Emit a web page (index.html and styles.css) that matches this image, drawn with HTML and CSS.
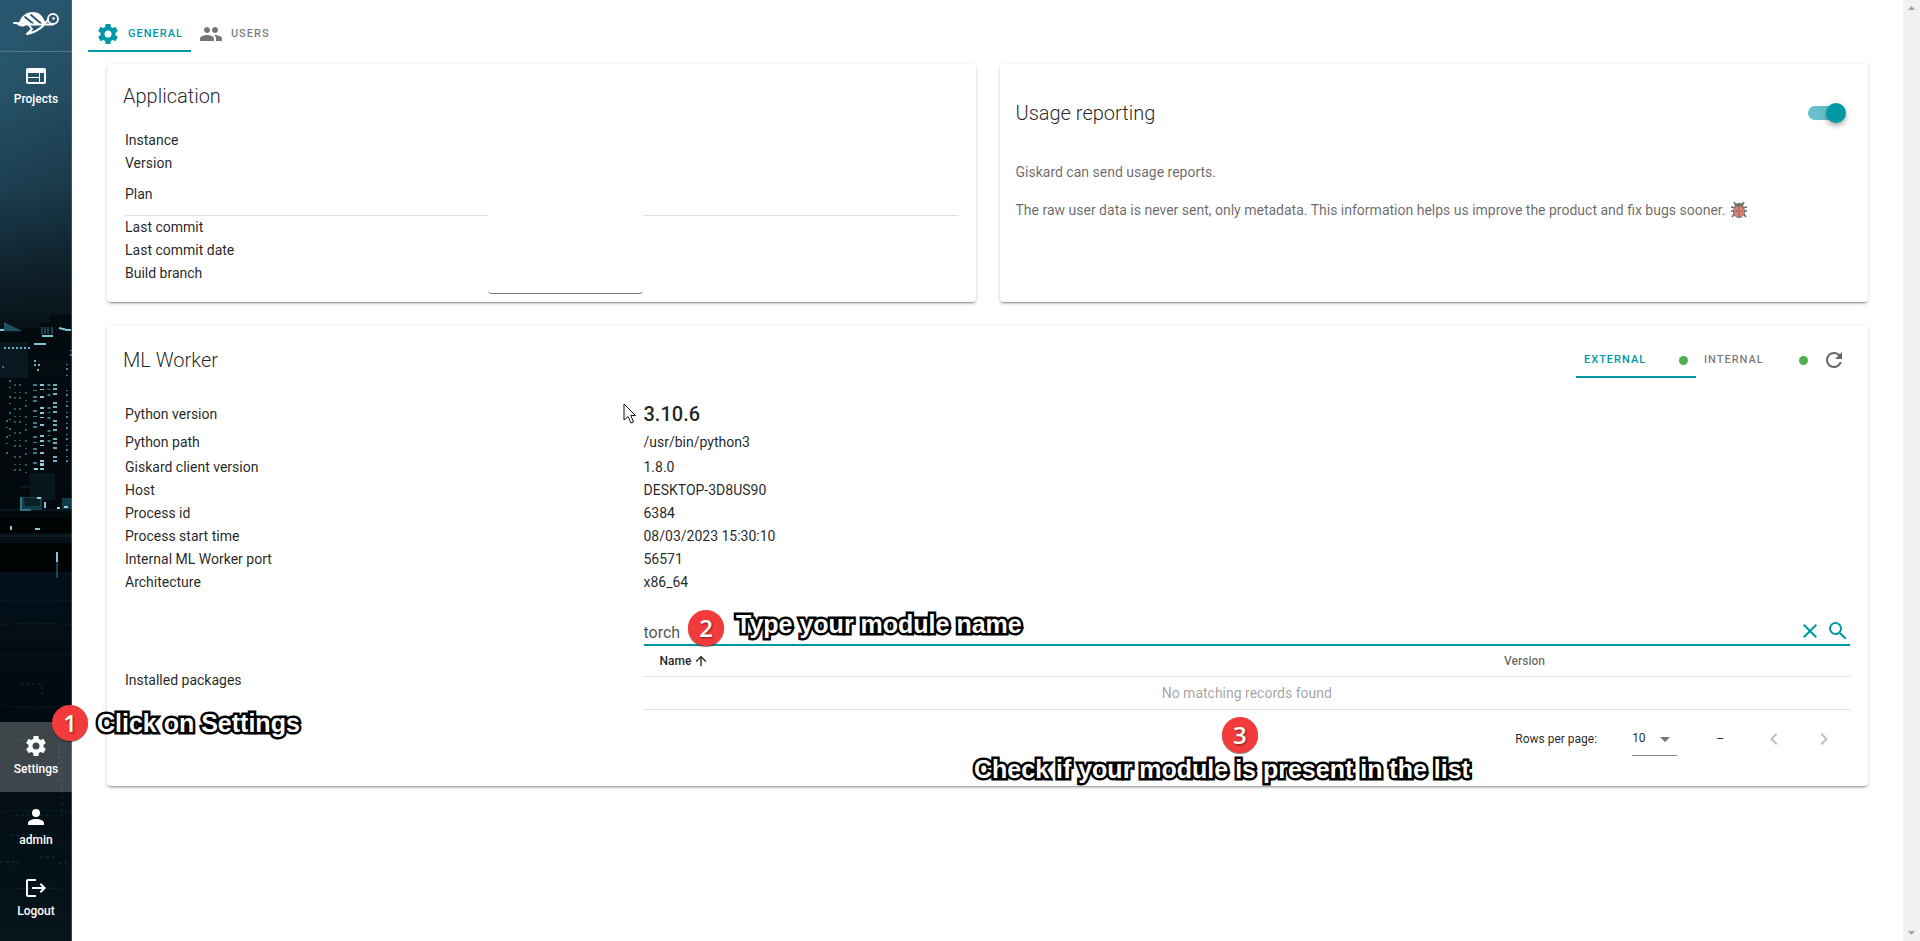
FILE: index.html
```html
<!DOCTYPE html>
<html lang="en">
<head>
<meta charset="utf-8">
<title>Giskard settings</title>
<link rel="stylesheet" href="styles.css">
</head>
<body>
<div class="app">
  <nav class="sidebar">
    <svg class="skyline" viewBox="0 0 72 941" preserveAspectRatio="xMidYMid slice" aria-hidden="true">
      <defs>
        <linearGradient id="sky" x1="0" y1="0" x2="0" y2="1">
          <stop offset="0" stop-color="#28566e"/><stop offset=".1" stop-color="#28566d"/><stop offset=".2" stop-color="#214a5f"/>
          <stop offset=".28" stop-color="#15303f"/><stop offset=".35" stop-color="#0a1921"/><stop offset=".45" stop-color="#050d12"/>
          <stop offset=".6" stop-color="#020608"/><stop offset=".612" stop-color="#03101a"/><stop offset=".75" stop-color="#020a10"/><stop offset="1" stop-color="#06141c"/>
        </linearGradient>
        <linearGradient id="shade" gradientUnits="userSpaceOnUse" x1="0" y1="60" x2="130" y2="190"><stop offset="0" stop-color="#000" stop-opacity="0"/><stop offset="1" stop-color="#000" stop-opacity=".3"/></linearGradient>
        <filter id="soft"><feGaussianBlur stdDeviation=".6"/></filter>
      </defs>
      <rect width="72" height="941" fill="url(#sky)"/>
      <rect width="72" height="360" fill="url(#shade)"/>
      <path d="M0 333H20V328H40V322H50V315H72V573H0Z" fill="#03090d" opacity=".75"/>
      <path d="M0 342H28V378H0Z" fill="#0d222c" opacity=".6"/>
      <path d="M30 473H55V500H30Z" fill="#0b1c25" opacity=".7"/>
      <path d="M0 518H72V574H0Z" fill="#000" opacity=".6"/>
      <path d="M0 533H72V543H0Z" fill="#0a171e" opacity=".7"/>
      <path d="M20 487H30M0 510H72M0 536H72M0 573H72" stroke="#17313e" stroke-width="1" opacity=".7"/>
      <g filter="url(#soft)" opacity=".85">
        <path d="M4 322L22 331H4Z" fill="#235b73"/>
        <path d="M20 497H42V510H20ZM62 498H72V509H62Z" fill="#174456"/><path d="M24 498H40V506H25Z" fill="#08202a"/>
        <path d="M21 497V510H31" stroke="#4c9dbc" stroke-width="1.5" fill="none"/>
        <path d="M0 330H4M42 336H53M59 328L67 330H71M34 344H46M45 502V508M35 529H40M11 526V530M57 552V562" stroke="#94e8f8" stroke-width="2" fill="none"/>
        <path d="M42 327V334M45 327V334M48 327V334M52 327V334M57 562V578" stroke="#3f91ac" fill="none"/>
        <path d="M4 348H30M34 361H38M34 365H41M37 370H41" stroke="#83cee0" stroke-width="2" stroke-dasharray="2 2" fill="none"/>
        <path d="M15 384V475M20 384V475M26 392V475" stroke="#3e8399" stroke-width="2" stroke-dasharray="2 6 1 4 2 9" fill="none" opacity=".75"/>
        <path d="M35 384V470" stroke="#63b6cd" stroke-width="4" stroke-dasharray="2 4 1 5 2 2 2 8" fill="none" opacity=".75"/>
        <path d="M42 384V472" stroke="#a0e9f4" stroke-width="4" stroke-dasharray="2 3 1 6 2 9 2 3" fill="none"/>
        <path d="M49 384V450" stroke="#58a8bf" stroke-width="3" stroke-dasharray="2 3 1 4 2 11" fill="none" opacity=".8"/>
        <path d="M55 384V464" stroke="#98e1ef" stroke-width="4" stroke-dasharray="2 2 2 3 2 7" fill="none" opacity=".9"/>
        <path d="M67 364V378M67 390V462M71 350V358" stroke="#75bccd" stroke-width="2" stroke-dasharray="1 3 2 5" fill="none" opacity=".8"/>
        <path d="M7 420V454M3 366V368M10 380V440" stroke="#4b9cb4" stroke-width="2" stroke-dasharray="2 5 1 8" fill="none" opacity=".8"/>
        <path d="M34 469H38M40 461H44M40 465H44M37 498H41M57 508H60M64 507H68" stroke="#b4f4fa" stroke-width="2"/>
        <path d="M20 684H42V697M59 744V775M20 740H36M15 815H50M40 857H54M58 864L70 861M0 862H18L10 870M25 750H42M35 770H42M62 760V820M10 835H50" stroke="#31596b" fill="none" stroke-dasharray="3 3" opacity=".5"/>
      </g>
      <path d="M0 600Q30 604 72 600M0 625Q30 621 72 625M0 655H72M0 705Q35 710 72 705M0 780H72M0 812Q40 808 72 812M0 848H72M0 890Q40 886 72 890M0 916H72" stroke="#133241" fill="none" opacity=".35"/>
      <path d="M71.5 0V941" stroke="#5d7c8c" opacity=".45"/>
    </svg>
    <a class="brand" href="#" aria-label="Giskard">
      <svg width="46" height="24" viewBox="0 0 46 24" aria-hidden="true">
        <path d="M6 11C8 4 13 0 20 0C26 0 30 4 32 10L30 12H12Z" fill="#fff"/>
        <path d="M12 5L20 11.500M18 3L28 11.500" stroke="#28566e" stroke-width="1.800" stroke-linecap="round"/>
        <path d="M1 11Q6 10.500 9 12.500H40" stroke="#fff" stroke-width="2" fill="none" stroke-linecap="round"/>
        <path d="M3 11.500Q6 15 11 14.500L13 12H6Z" fill="#fff"/>
        <path d="M30 11Q34.500 11 35.500 6" stroke="#fff" stroke-width="2" fill="none"/>
        <circle cx="40" cy="7" r="5" fill="#28566e" stroke="#fff" stroke-width="1.800"/><circle cx="40.500" cy="6.500" r="1.300" fill="#fff"/>
        <path d="M15 12L19 17L14 22Q24 20 31 13" stroke="#fff" stroke-width="2" fill="none" stroke-linejoin="round"/>
        <path d="M18 19L14 22L20 20.500Z" fill="#fff"/>
      </svg>
    </a>
    <a class="nav-item" href="#">
      <svg width="24" height="24" viewBox="0 0 24 24"><path d="M20 4H4C2.900 4 2 4.900 2 6V18C2 19.100 2.900 20 4 20H20C21.100 20 22 19.100 22 18V6C22 4.900 21.100 4 20 4M15 18H4V14H15V18M15 13H4V9H15V13M20 18H16V9H20V18Z"/></svg>
      <span>Projects</span>
    </a>
    <div class="nav-bottom">
      <a class="nav-item active" href="#">
        <svg width="24" height="24" viewBox="0 0 24 24"><path d="M12,15.5A3.5,3.5 0 0,1 8.5,12A3.5,3.5 0 0,1 12,8.5A3.5,3.5 0 0,1 15.5,12A3.5,3.5 0 0,1 12,15.5M19.43,12.97C19.47,12.65 19.5,12.33 19.5,12C19.5,11.67 19.47,11.34 19.43,11L21.54,9.37C21.73,9.22 21.78,8.95 21.66,8.73L19.66,5.27C19.54,5.05 19.27,4.96 19.05,5.05L16.56,6.05C16.04,5.66 15.5,5.32 14.87,5.07L14.5,2.42C14.46,2.18 14.25,2 14,2H10C9.75,2 9.54,2.18 9.5,2.42L9.13,5.07C8.5,5.32 7.96,5.66 7.44,6.05L4.95,5.05C4.73,4.96 4.46,5.05 4.34,5.27L2.34,8.73C2.21,8.95 2.27,9.22 2.46,9.37L4.57,11C4.53,11.34 4.5,11.67 4.5,12C4.5,12.33 4.53,12.65 4.57,12.97L2.46,14.63C2.27,14.78 2.21,15.05 2.34,15.27L4.34,18.73C4.46,18.95 4.73,19.03 4.95,18.95L7.44,17.94C7.96,18.34 8.5,18.68 9.13,18.93L9.5,21.58C9.54,21.82 9.75,22 10,22H14C14.25,22 14.46,21.82 14.5,21.58L14.87,18.93C15.5,18.67 16.04,18.34 16.56,17.94L19.05,18.95C19.27,19.03 19.54,18.95 19.66,18.73L21.66,15.27C21.78,15.05 21.73,14.78 21.54,14.63L19.43,12.97Z"/></svg>
        <span>Settings</span>
      </a>
      <a class="nav-item" href="#">
        <svg width="24" height="24" viewBox="0 0 24 24"><path d="M12,4A4,4 0 0,1 16,8A4,4 0 0,1 12,12A4,4 0 0,1 8,8A4,4 0 0,1 12,4M12,14C16.42,14 20,15.79 20,18V20H4V18C4,15.79 7.58,14 12,14Z"/></svg>
        <span>admin</span>
      </a>
      <a class="nav-item" href="#">
        <svg width="24" height="24" viewBox="0 0 24 24"><path d="M17 7L15.590 8.410L18.170 11H8V13H18.170L15.590 15.580L17 17L22 12M4 5H12V3H4C2.900 3 2 3.900 2 5V19C2 20.100 2.900 21 4 21H12V19H4V5Z"/></svg>
        <span>Logout</span>
      </a>
    </div>
  </nav>

  <main class="main">
    <div class="tabs" role="tablist">
      <button class="tab selected" role="tab" aria-selected="true">
        <svg width="24" height="24" viewBox="0 0 24 24"><path d="M12,15.5A3.5,3.5 0 0,1 8.5,12A3.5,3.5 0 0,1 12,8.5A3.5,3.5 0 0,1 15.5,12A3.5,3.5 0 0,1 12,15.5M19.43,12.97C19.47,12.65 19.5,12.33 19.5,12C19.5,11.67 19.47,11.34 19.43,11L21.54,9.37C21.73,9.22 21.78,8.95 21.66,8.73L19.66,5.27C19.54,5.05 19.27,4.96 19.05,5.05L16.56,6.05C16.04,5.66 15.5,5.32 14.87,5.07L14.5,2.42C14.46,2.18 14.25,2 14,2H10C9.75,2 9.54,2.18 9.5,2.42L9.13,5.07C8.5,5.32 7.96,5.66 7.44,6.05L4.95,5.05C4.73,4.96 4.46,5.05 4.34,5.27L2.34,8.73C2.21,8.95 2.27,9.22 2.46,9.37L4.57,11C4.53,11.34 4.5,11.67 4.5,12C4.5,12.33 4.53,12.65 4.57,12.97L2.46,14.63C2.27,14.78 2.21,15.05 2.34,15.27L4.34,18.73C4.46,18.95 4.73,19.03 4.95,18.95L7.44,17.94C7.96,18.34 8.5,18.68 9.13,18.93L9.5,21.58C9.54,21.82 9.75,22 10,22H14C14.25,22 14.46,21.82 14.5,21.58L14.87,18.93C15.5,18.67 16.04,18.34 16.56,17.94L19.05,18.95C19.27,19.03 19.54,18.95 19.66,18.73L21.66,15.27C21.78,15.05 21.73,14.78 21.54,14.63L19.43,12.97Z"/></svg>
        General
      </button>
      <button class="tab" role="tab" aria-selected="false">
        <svg width="24" height="24" viewBox="0 0 24 24"><path d="M16 11c1.660 0 2.990-1.340 2.990-3S17.660 5 16 5c-1.660 0-3 1.340-3 3s1.340 3 3 3zm-8 0c1.660 0 2.990-1.340 2.990-3S9.660 5 8 5C6.340 5 5 6.340 5 8s1.340 3 3 3zm0 2c-2.330 0-7 1.170-7 3.500V19h14v-2.500c0-2.330-4.670-3.500-7-3.500zm8 0c-.290 0-.620.020-.970.050 1.160.840 1.970 1.970 1.970 3.450V19h6v-2.500c0-2.330-4.670-3.500-7-3.500z"/></svg>
        Users
      </button>
    </div>

    <div class="cards">
      <section class="card application">
        <h2>Application</h2>
        <table class="facts">
          <tr><th scope="row">Instance</th><td></td></tr>
          <tr><th scope="row">Version</th><td></td></tr>
          <tr class="plan"><th scope="row">Plan</th><td></td></tr>
          <tr><th scope="row">Last commit</th><td></td></tr>
          <tr><th scope="row">Last commit date</th><td></td></tr>
          <tr><th scope="row">Build branch</th><td></td></tr>
        </table>
        <div class="cover"></div>
      </section>

      <section class="card usage">
        <div class="usage-head">
          <h2 id="usage-title">Usage reporting</h2>
          <input class="switch" type="checkbox" role="switch" aria-labelledby="usage-title" checked>
        </div>
        <p>Giskard can send usage reports.</p>
        <p>The raw user data is never sent, only metadata. This information helps us improve the product and fix bugs sooner.
          <svg class="bug" width="16" height="16" viewBox="0 0 16 16" role="img" aria-label="bug"><path d="M3 0L5 3M13 0L11 3M0 5L4 6M16 5L12 6M0 9H16M1 15L4 11M15 15L12 11M8 1V4" stroke="#222" stroke-width="1.500"/><ellipse cx="8" cy="4" rx="4.500" ry="3" fill="#333"/><ellipse cx="8" cy="9.500" rx="5.500" ry="6" fill="#e04a30" stroke="#333"/><path d="M8 4V15" stroke="#333"/><circle cx="5.500" cy="9" r="1" fill="#333"/><circle cx="10.500" cy="9" r="1" fill="#333"/></svg></p>
      </section>

      <section class="card worker">
        <div class="worker-head">
          <h2>ML Worker</h2>
          <div class="worker-tabs" role="tablist">
            <button class="tab selected" role="tab" aria-selected="true">External<i class="dot"></i></button>
            <button class="tab" role="tab" aria-selected="false">Internal<i class="dot"></i></button>
          </div>
          <button class="icon-button" aria-label="Reload">
            <svg width="24" height="24" viewBox="0 0 24 24"><path d="M17.65,6.35C16.2,4.9 14.21,4 12,4A8,8 0 0,0 4,12A8,8 0 0,0 12,20C15.73,20 18.84,17.45 19.73,14H17.65C16.83,16.33 14.61,18 12,18A6,6 0 0,1 6,12A6,6 0 0,1 12,6C13.66,6 15.14,6.69 16.22,7.78L13,11H20V4L17.65,6.35Z"/></svg>
          </button>
        </div>
        <table class="facts worker-facts">
          <tr class="python"><th scope="row">Python version</th><td>3.10.6</td></tr>
          <tr class="path"><th scope="row">Python path</th><td>/usr/bin/python3</td></tr>
          <tr><th scope="row">Giskard client version</th><td>1.8.0</td></tr>
          <tr><th scope="row">Host</th><td>DESKTOP-3D8US90</td></tr>
          <tr><th scope="row">Process id</th><td>6384</td></tr>
          <tr><th scope="row">Process start time</th><td>08/03/2023 15:30:10</td></tr>
          <tr><th scope="row">Internal ML Worker port</th><td>56571</td></tr>
          <tr><th scope="row">Architecture</th><td>x86_64</td></tr>
          <tr class="packages"><th scope="row">Installed packages</th>
            <td>
              <div class="search">
                <input type="text" value="torch" aria-label="Search packages">
                <button aria-label="Clear"><svg width="24" height="24" viewBox="0 0 24 24"><path d="M19,6.410L17.590,5L12,10.590L6.410,5L5,6.410L10.590,12L5,17.590L6.410,19L12,13.410L17.590,19L19,17.590L13.410,12L19,6.410Z"/></svg></button>
                <button aria-label="Search"><svg width="24" height="24" viewBox="0 0 24 24"><path d="M9.500,3A6.500,6.500 0 0,1 16,9.500C16,11.110 15.410,12.590 14.440,13.730L14.710,14H15.500L20.500,19L19,20.500L14,15.500V14.710L13.730,14.440C12.590,15.410 11.110,16 9.500,16A6.500,6.500 0 0,1 3,9.500A6.500,6.500 0 0,1 9.500,3M9.500,5C7,5 5,7 5,9.500C5,12 7,14 9.500,14C12,14 14,12 14,9.500C14,7 12,5 9.500,5Z"/></svg></button>
              </div>
              <table class="package-list">
                <thead><tr>
                  <th scope="col" class="sorted">Name<svg width="16" height="16" viewBox="0 0 24 24"><path d="M13,20H11V8L5.500,13.500L4.080,12.080L12,4.160L19.920,12.080L18.500,13.500L13,8V20Z"/></svg></th>
                  <th scope="col">Version</th>
                </tr></thead>
                <tbody><tr><td colspan="2">No matching records found</td></tr></tbody>
              </table>
              <div class="pager">
                <label for="rows">Rows per page:</label>
                <span class="select-wrap">
                  <select id="rows"><option>10</option><option>25</option></select>
                  <svg width="24" height="24" viewBox="0 0 24 24"><path d="M7 10L12 15L17 10Z"/></svg>
                </span>
                <span class="range">–</span>
                <button disabled aria-label="Previous page"><svg width="24" height="24" viewBox="0 0 24 24"><path d="M15.410,16.580L10.830,12L15.410,7.410L14,6L8,12L14,18L15.410,16.580Z"/></svg></button>
                <button disabled aria-label="Next page"><svg width="24" height="24" viewBox="0 0 24 24"><path d="M8.590,16.580L13.170,12L8.590,7.410L10,6L16,12L10,18L8.590,16.580Z"/></svg></button>
              </div>
            </td></tr>
        </table>
      </section>
    </div>
  </main>

  <div class="scrollbar" aria-hidden="true">
    <svg width="17" height="17" viewBox="0 0 17 17"><path d="M5 10L8.500 6L12 10Z"/></svg>
    <svg width="17" height="17" viewBox="0 0 17 17"><path d="M5 7L8.500 11L12 7Z"/></svg>
  </div>

  <div class="note note-settings"><b>1</b><span>Click on Settings</span></div>
  <div class="note note-search"><b>2</b><span>Type your module name</span></div>
  <div class="note note-list"><b>3</b><span>Check if your module is present in the list</span></div>
  <svg class="cursor" width="14" height="21" viewBox="0 0 14 21" aria-hidden="true"><path d="M1 1V17L5 13.500L8 20L10.500 19L7.800 12.500H12.500Z" fill="#fff" stroke="#111"/></svg>
</div>
</body>
</html>
```
FILE: styles.css
```css
* { box-sizing: border-box; }
body { margin: 0; font-family: Roboto, "Liberation Sans", sans-serif; font-size: 14px; line-height: 20px; color: rgba(0, 0, 0, .87); background: #fff; }
button, input, select { font: inherit; color: inherit; border: 0; padding: 0; margin: 0; background: none; }
button { cursor: pointer; }
svg { display: block; fill: currentColor; }
h2 { margin: 0; font-size: 20px; font-weight: 300; line-height: 32px; }
table { width: 100%; border-collapse: collapse; }

.app { position: relative; display: flex; min-height: 100vh; }

.sidebar { position: relative; flex: none; width: 72px; display: flex; flex-direction: column; padding-bottom: 7px; color: #fff; background: #03101a; }
.skyline { position: absolute; inset: 0; width: 100%; height: 100%; }
.brand { position: relative; display: flex; justify-content: center; height: 52px; padding-top: 12px; border-bottom: 1px solid rgba(255, 255, 255, .2); }
.nav-bottom { display: flex; flex-direction: column; gap: 1px; margin-top: auto; }
.nav-item { position: relative; display: flex; flex-direction: column; align-items: center; height: 70px; padding-top: 12px; color: #fff; font-size: 12px; font-weight: 500; line-height: 20px; text-decoration: none; }
.nav-item span { margin-top: 1px; }
.nav-item.active { background: rgba(255, 255, 255, .24); }

.main { flex: 1; min-width: 0; padding-left: 16px; }
.tabs { display: flex; height: 52px; padding-top: 16px; }
.tab { display: flex; align-items: center; height: 100%; padding: 0 8px; color: rgba(0, 0, 0, .54); border: 0 solid transparent; border-width: 2px 0; font-size: 11px; font-weight: 500; letter-spacing: 1px; text-transform: uppercase; }
.tabs .tab svg { margin-right: 8px; }
.tab.selected { color: #0097a7; border-bottom-color: #0097a7; }

.cards { display: grid; grid-template-columns: 1fr 1fr; gap: 24px; padding: 12px 35px 24px 19px; }
.card { position: relative; border-radius: 4px; background: #fff; box-shadow: 0 3px 1px -2px rgba(0, 0, 0, .2), 0 2px 2px 0 rgba(0, 0, 0, .14), 0 1px 5px 0 rgba(0, 0, 0, .12); }
.application { padding: 16px 16px 18px; }
.facts { width: calc(100% - 4px); margin: 16px 2px 0; }
.facts th, .facts td { height: 23px; padding: 0; text-align: left; font-weight: 400; }
.facts .plan th, .facts .plan td { height: 41px; border-bottom: 1px solid #e0e0e0; }
.cover { position: absolute; left: 381px; bottom: 8px; width: 155px; height: 159px; border-bottom: 1px solid #777; border-radius: 4px; background: #fff; }

.usage { padding: 33px 16px 16px; color: rgba(0, 0, 0, .6); }
.usage h2 { color: rgba(0, 0, 0, .87); }
.usage-head { display: flex; align-items: center; justify-content: space-between; padding-right: 8px; margin-bottom: 33px; }
.usage p { margin: 0 0 18px; }
.bug { display: inline-block; vertical-align: -3px; margin-left: 2px; opacity: .7; }
.switch { appearance: none; position: relative; width: 36px; height: 14px; border-radius: 7px; background: #66c1ca; cursor: pointer; }
.switch::before { content: ""; position: absolute; right: -2px; top: -3px; width: 20px; height: 20px; border-radius: 50%; background: #0097a7; box-shadow: 0 2px 4px -1px rgba(0, 0, 0, .2), 0 4px 5px 0 rgba(0, 0, 0, .14), 0 1px 10px 0 rgba(0, 0, 0, .12); }

.worker { grid-column: 1 / -1; padding: 16px 16px 18px; }
.worker-head { display: flex; align-items: center; height: 36px; }
.worker-head h2 { flex: 1; }
.worker-tabs { display: flex; height: 36px; }
.worker-tabs .tab { width: 120px; justify-content: space-between; }
.dot { width: 9px; height: 9px; border-radius: 50%; background: #4caf50; }
.icon-button { margin: 0 6px; color: rgba(0, 0, 0, .6); }
.worker-facts { table-layout: fixed; margin-top: 20px; }
.worker-facts > tbody > tr > th { width: 30%; }
.worker-facts > tbody > tr > td { padding-left: 1px; }
.facts .python td { height: 31px; font-size: 20px; font-weight: 500; }
.facts .path th, .facts .path td { height: 26px; }
.search { display: flex; align-items: center; gap: 4px; margin-top: 19px; height: 34px; border-bottom: 2px solid #0097a7; color: #0097a7; }
.search input { flex: 1; min-width: 0; height: 32px; padding-top: 8px; outline: 0; font-size: 16px; color: rgba(0, 0, 0, .7); }
.search button { padding-top: 5px; }
.package-list { table-layout: fixed; }
.facts .package-list th { height: 30px; padding: 0 16px; border-bottom: 1px solid #e0e0e0; color: rgba(0, 0, 0, .6); font-size: 12px; font-weight: 500; }
.facts .package-list th.sorted { width: 70%; color: rgba(0, 0, 0, .87); }
.sorted svg { display: inline-block; vertical-align: -4px; margin-left: 2px; }
.facts .package-list td { height: 33px; padding: 0; border-bottom: 1px solid #e0e0e0; color: rgba(0, 0, 0, .38); text-align: center; }
.pager { display: flex; align-items: center; justify-content: flex-end; height: 58px; padding-right: 14px; font-size: 12px; }
.select-wrap { position: relative; width: 45px; height: 34px; margin: 0 39px 0 35px; border-bottom: 1px solid #8a8a8a; }
.select-wrap select { appearance: none; width: 100%; height: 33px; outline: 0; }
.select-wrap svg { position: absolute; right: 0; top: 5px; color: rgba(0, 0, 0, .54); pointer-events: none; }
.range { margin-right: 38px; }
.pager button { color: rgba(0, 0, 0, .26); }
.pager button + button { margin-left: 26px; }

.scrollbar { flex: none; width: 17px; display: flex; flex-direction: column; justify-content: space-between; color: #a3a3a3; background: #f1f1f1; }

.note { position: absolute; display: flex; align-items: center; gap: 9px; white-space: nowrap; pointer-events: none; }
.note b { display: grid; place-items: center; width: 36px; height: 36px; border-radius: 50%; background: #f43b3b; box-shadow: 0 1px 1px rgba(0, 0, 0, .5); color: #fff; font: 600 24px/36px "Open Sans", sans-serif; text-shadow: 1px 1px 2px rgba(0, 0, 0, .5); }
.note span { font: bold 25px/28px "Liberation Sans", Arial, sans-serif; color: #fff; -webkit-text-stroke: 5px #000; paint-order: stroke fill; }
.note-settings { left: 52px; top: 705px; }
.note-search { left: 688px; top: 610px; gap: 12px; align-items: flex-start; }
.note-list { left: 974px; top: 717px; flex-direction: column; gap: 2px; }
.note-list b { margin-left: 36px; }
.cursor { position: absolute; left: 623px; top: 403px; }
```
